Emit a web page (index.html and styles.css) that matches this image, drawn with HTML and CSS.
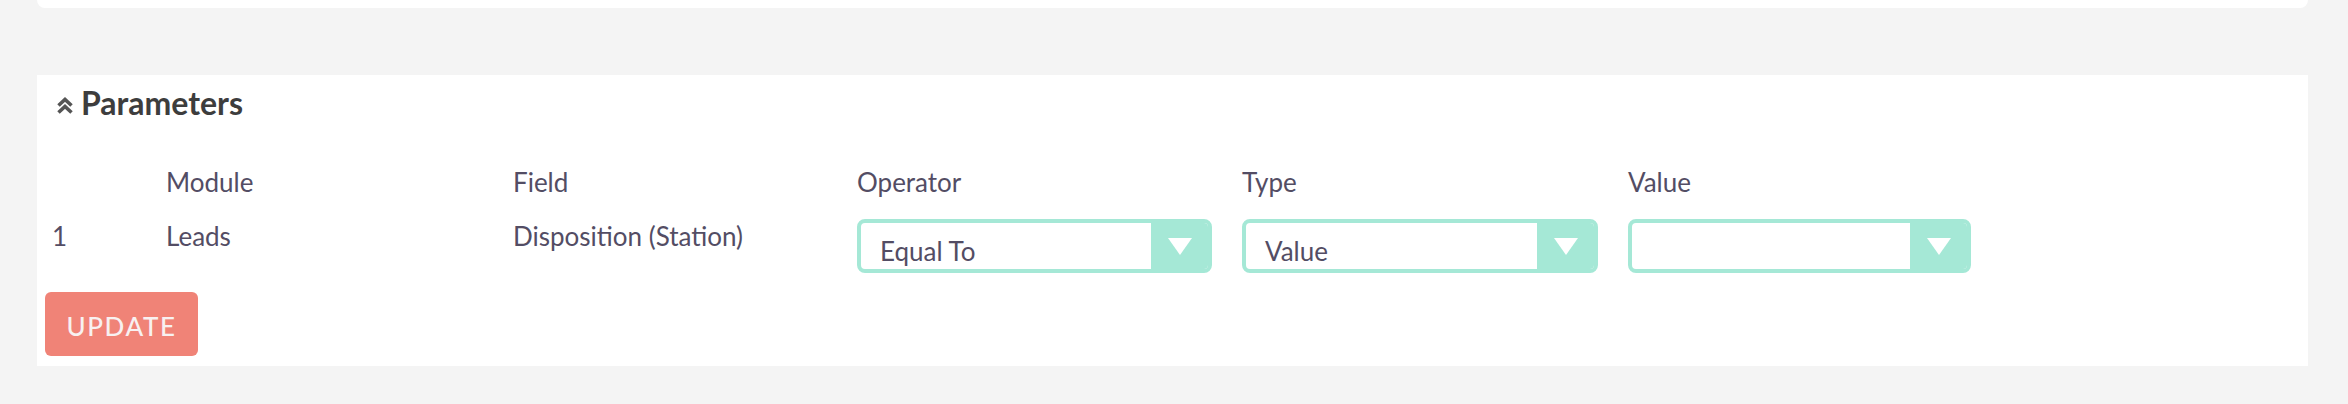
FILE: index.html
```html
<!DOCTYPE html>
<html>
<head>
<meta charset="utf-8">
<link rel="stylesheet" href="styles.css">
</head>
<body>
<div class="page">
  <div class="top-card"></div>
  <section class="panel">
    <h2 class="panel-heading">
      <svg class="chev" viewBox="0 0 16 17" width="16" height="17" aria-hidden="true">
        <polyline points="1.5,8.5 8,2.5 14.5,8.5" fill="none" stroke="#555555" stroke-width="3.6"/>
        <polyline points="1.5,15.5 8,9.5 14.5,15.5" fill="none" stroke="#555555" stroke-width="3.6"/>
      </svg>
      <span>Parameters</span>
    </h2>
    <div class="params">
      <div class="cell head"></div>
      <div class="cell head">Module</div>
      <div class="cell head">Field</div>
      <div class="cell head">Operator</div>
      <div class="cell head">Type</div>
      <div class="cell head">Value</div>

      <div class="cell">1</div>
      <div class="cell">Leads</div>
      <div class="cell">Disposition (Station)</div>
      <div class="cell">
        <div class="select sel-op"><span class="sel-text">Equal To</span><span class="sel-arrow"><svg viewBox="0 0 24 17" width="24" height="17"><polygon points="0,0 24,0 12,17" fill="#ffffff"/></svg></span></div>
      </div>
      <div class="cell">
        <div class="select sel-type"><span class="sel-text">Value</span><span class="sel-arrow"><svg viewBox="0 0 24 17" width="24" height="17"><polygon points="0,0 24,0 12,17" fill="#ffffff"/></svg></span></div>
      </div>
      <div class="cell">
        <div class="select sel-val"><span class="sel-text"></span><span class="sel-arrow"><svg viewBox="0 0 24 17" width="24" height="17"><polygon points="0,0 24,0 12,17" fill="#ffffff"/></svg></span></div>
      </div>
    </div>
    <button class="btn-update" type="button">UPDATE</button>
  </section>
</div>
</body>
</html>
```
FILE: styles.css
```css
html, body {
  margin: 0;
  padding: 0;
  background: #f4f4f4;
}
body {
  font-family: Lato, "Open Sans", "Liberation Sans", sans-serif;
  color: #534d64;
  font-size: 26px;
}
.page {
  padding: 0 40px 0 37px;
}
.top-card {
  height: 8px;
  background: #ffffff;
  border-radius: 0 0 8px 8px;
}
.panel {
  margin-top: 67px;
  background: #ffffff;
  padding: 9px 8px 8px 8px;
  height: 291px;
  box-sizing: border-box;
}
.panel-heading {
  margin: 0 0 0 12px;
  display: flex;
  align-items: center;
  gap: 8px;
  font-size: 32px;
  font-weight: 700;
  line-height: 38px;
  color: #3d3d3d;
}
.chev {
  display: block;
  margin-top: 4px;
}
.params {
  margin-top: 45px;
  display: grid;
  grid-template-columns: 114px 347px 344px 385px 386px 1fr;
  row-gap: 23px;
  line-height: 31px;
}
.cell {
  padding-left: 7px;
}
.select {
  display: flex;
  height: 54px;
  box-sizing: border-box;
  border: 4px solid #a5e8d6;
  border-radius: 8px;
  background: #ffffff;
  overflow: hidden;
  margin-top: -2px;
}
.sel-op { width: 355px; }
.sel-type { width: 356px; }
.sel-val { width: 343px; }
.sel-text {
  flex: 1;
  display: flex;
  align-items: center;
  padding: 11px 0 0 19px;
  font-size: 26px;
  color: #534d64;
}
.sel-arrow {
  width: 57px;
  background: #a5e8d6;
  display: flex;
  align-items: center;
  justify-content: center;
}
.sel-arrow svg {
  display: block;
  margin-top: 1px;
}
.btn-update {
  display: block;
  margin-top: 19px;
  width: 153px;
  height: 64px;
  border: 0;
  border-radius: 6px;
  background: #f08377;
  color: #f8f1f1;
  font-family: Lato, "Open Sans", "Liberation Sans", sans-serif;
  font-size: 26px;
  font-weight: 500;
  letter-spacing: 1.6px;
  padding: 4px 0 0 0;
  cursor: pointer;
}
```
